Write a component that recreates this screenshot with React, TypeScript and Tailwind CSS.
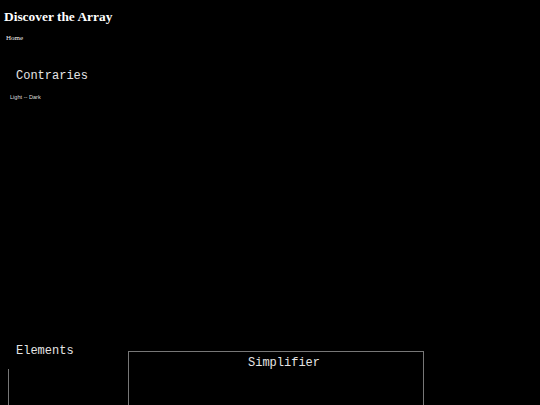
import React from 'react';

const mono = { fontFamily: '"Liberation Mono", monospace' };

export default function App() {
  return (
    <div className="w-[540px] h-[405px] overflow-hidden bg-black text-white relative">
      {/* Header */}
      <h1 className="pl-[4px] pt-[8px] text-[13.4px] font-bold leading-[18px]" style={{ fontFamily: '"Liberation Serif", serif' }}>
        Discover the Array
      </h1>
      <nav className="pl-[6px] pt-[7px] text-[7px] leading-[10px] text-[#eee]" style={{ fontFamily: '"Liberation Serif", serif' }}>
        Home
      </nav>

      {/* Contraries */}
      <section className="pt-[26px] h-[301px]">
        <h2 className="pl-[16px] text-[12px] leading-[14px] text-[#e5e5e5]" style={mono}>Contraries</h2>
        <p className="pl-[10px] pt-[10px] text-[5.6px] leading-[8px] text-[#ddd]" style={{ fontFamily: '"Liberation Sans", sans-serif' }}>
          Light -- Dark
        </p>
      </section>

      {/* Elements */}
      <section className="flex">
        <div className="w-[128px] shrink-0">
          <h2 className="pl-[16px] text-[12px] leading-[14px] text-[#e5e5e5]" style={mono}>Elements</h2>
          <div className="ml-[8px] mt-[11px] h-[40px] border-l border-[#777]" />
        </div>
        <div className="mt-[7px] w-[296px] h-[60px] border border-[#777] pl-[16px] text-center">
          <h3 className="pt-[4px] text-[12px] leading-[14px] text-[#e5e5e5]" style={mono}>Simplifier</h3>
        </div>
      </section>
    </div>
  );
}
